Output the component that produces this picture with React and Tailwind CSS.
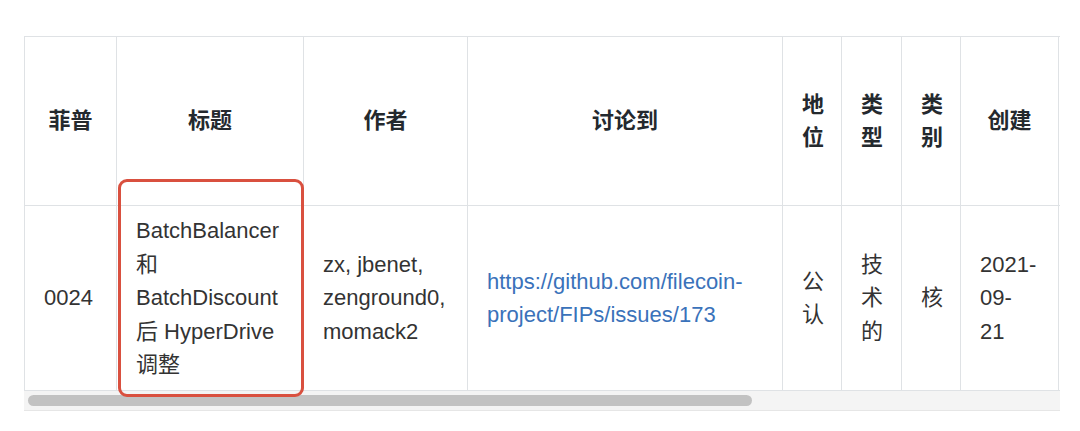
const font = { fontFamily: '"Helvetica Neue", "Liberation Sans", "Noto Sans CJK SC", sans-serif' };

const cols = [
  { key: "fip", head: ["菲普"], w: 92 },
  { key: "title", head: ["标题"], w: 187 },
  { key: "author", head: ["作者"], w: 164 },
  { key: "discuss", head: ["讨论到"], w: 315 },
  { key: "status", head: ["地", "位"], w: 59 },
  { key: "type", head: ["类", "型"], w: 60 },
  { key: "cat", head: ["类", "别"], w: 59 },
  { key: "created", head: ["创建"], w: 98 },
  { key: "more", head: [], w: 140 },
];

const row = {
  fip: ["0024"],
  title: ["BatchBalancer", "和", "BatchDiscount", "后 HyperDrive", "调整"],
  author: ["zx, jbenet,", "zenground0,", "momack2"],
  discuss: ["https://github.com/filecoin-", "project/FIPs/issues/173"],
  status: ["公", "认"],
  type: ["技", "术", "的"],
  cat: ["核"],
  created: ["2021-", "09-", "21"],
  more: [],
};

function Lines({ lines }) {
  return lines.map((line, i) => (
    <span key={i} className="block whitespace-nowrap">
      {line}
    </span>
  ));
}

export default function App() {
  return (
    <div className="h-[431px] w-[1080px] bg-white" style={font}>
      <div className="relative pl-[24px] pt-[36px]">
        <div className="w-[1036px] overflow-hidden">
          <table className="table-fixed border-collapse text-[22px] leading-[33.5px]" style={{ width: 1134 }}>
            <colgroup>
              {cols.map((c) => (
                <col key={c.key} style={{ width: c.w }} />
              ))}
            </colgroup>
            <thead>
              <tr className="h-[169px]">
                {cols.map((c) => (
                  <th
                    key={c.key}
                    className="border border-[#dfe2e5] px-[19px] text-center align-middle font-bold text-[#24292e]"
                  >
                    <Lines lines={c.head} />
                  </th>
                ))}
              </tr>
            </thead>
            <tbody>
              <tr className="h-[185px]">
                {cols.map((c) => (
                  <td
                    key={c.key}
                    className={
                      "border border-[#dfe2e5] px-[19px] align-middle " +
                      (c.key === "discuss"
                        ? "text-left text-[#3a72ba]"
                        : c.key === "status" || c.key === "type" || c.key === "cat"
                        ? "text-center text-[#333]"
                        : "text-left text-[#333]")
                    }
                  >
                    <Lines lines={row[c.key]} />
                  </td>
                ))}
              </tr>
            </tbody>
          </table>
          <div className="flex h-[20px] items-center border-b border-[#e6e6e6] bg-[#f4f4f4] px-[4px]">
            <div className="h-[11px] w-[724px] rounded-full bg-[#c2c2c2]" />
          </div>
        </div>
        <div className="absolute left-[118px] top-[179px] h-[218px] w-[186px] rounded-[9px] border-[3px] border-[#d9503f]" />
      </div>
    </div>
  );
}
